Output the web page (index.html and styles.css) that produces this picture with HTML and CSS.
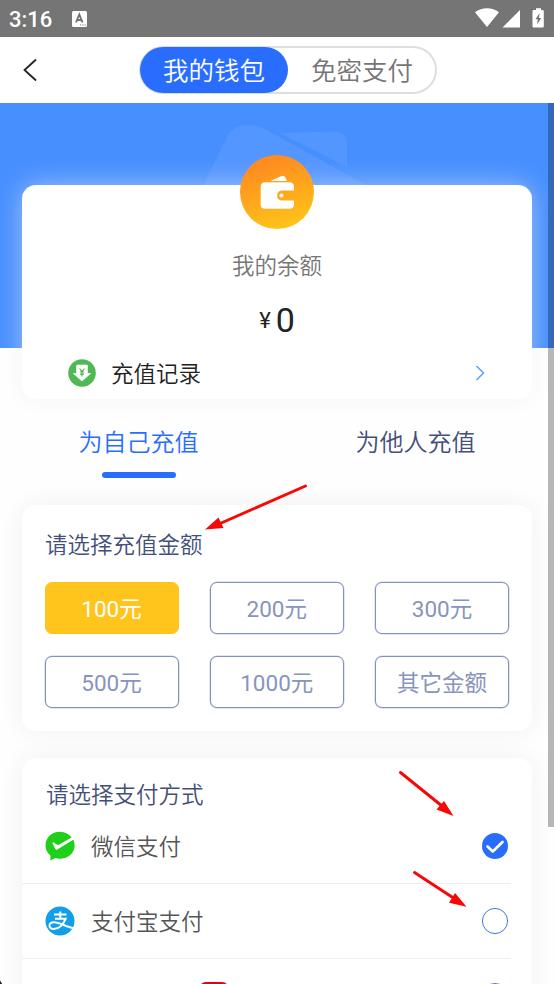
FILE: index.html
```html
<!DOCTYPE html>
<html lang="zh-CN">
<head>
<meta charset="utf-8">
<title>我的钱包</title>
<link rel="stylesheet" href="styles.css">
</head>
<body>
<div class="screen">
  <div class="status">
    <span class="clock">3:16</span>
    <svg class="ime" width="15" height="16" viewBox="0 0 15 16"><rect width="15" height="16" rx="1.5" fill="#fff"/><path d="M4 11.5 7.3 3.5 10.6 11.5M5.1 9h4.4" fill="none" stroke="#757575" stroke-width="1.9"/><path d="M8 14h1.2M10.3 14h1.2M12.6 14h1.2" stroke="#757575" stroke-width="1.2"/></svg>
    <svg class="signals" width="72" height="20" viewBox="0 0 72 20"><path d="M0 4.2C7-1.1 17-1.1 24 4.2L12 19Z" fill="#fff"/><path d="M45 2v17.5H27.5Z" fill="#fff"/><path d="M58.8 2H61V.2h5V2h1.500q1.300 0 1.300 1.300v15q0 1.300-1.300 1.300h-8.700q-1.300 0-1.300-1.300v-15Q57.500 2 58.800 2Z" fill="#fff"/><path d="m64.600 5-4.100 6.200h2.300l-.8 5.200 4.200-6.500h-2.300Z" fill="#757575"/></svg>
  </div>
  <header class="header">
    <svg class="back" width="16" height="24" viewBox="0 0 16 24"><path d="M13.500 2 2.500 12l11 10" fill="none" stroke="#222" stroke-width="1.800" stroke-linecap="round"/></svg>
    <nav class="switch"><a class="seg seg-on">我的钱包</a><a class="seg">免密支付</a></nav>
  </header>

  <section class="wallet">
    <svg class="watermark" width="180" height="90" viewBox="0 0 180 90"><path d="M0 80 26 27Q32 14 45 13.500 58 12 70 20L168 74V90H0Z" fill="#fff" fill-opacity=".07"/><path d="M80 21 134 19.500Q147 20 147 33V55Z" fill="#fff" fill-opacity=".07"/></svg>
    <div class="card balance">
      <svg class="badge" width="74" height="74" viewBox="0 0 74 74"><defs><linearGradient id="gold" x1=".35" y1="0" x2=".65" y2="1"><stop offset=".1" stop-color="#ff8c20"/><stop offset="1" stop-color="#ffc518"/></linearGradient></defs><circle cx="37" cy="37" r="37" fill="url(#gold)"/><path d="M30.500 26 41 21.200q3.200-1.200 4.700 1.800l1.200 3Z" fill="#fff"/><path d="M25 27.300h24.500q4.500 0 4.500 4.500v3.700H42.500q-5.300 0-5.300 5t5.300 5H54v3.700q0 4.500-4.500 4.500H25q-4.300 0-4.300-4.500V31.800q0-4.500 4.300-4.500Z" fill="#fff"/><circle cx="41.500" cy="40.500" r="2" fill="#fff"/></svg>
      <div class="balance-title">我的余额</div>
      <div class="amount"><span class="yen">¥</span><span>0</span></div>
      <div class="history">
        <svg width="28" height="28" viewBox="0 0 28 28"><circle cx="14" cy="14" r="13.800" fill="#50b955"/><path d="M8.500 7q0-1 1-1h9q1 0 1 1v7.500h3.200L14 22l-8.700-7.500h3.200Z" fill="#fff" stroke="#fff" stroke-width=".6" stroke-linejoin="round"/><path d="m11.600 9.500 2.400 3.200 2.400-3.200M14 12.500v5M11.800 13h4.400M11.800 15.200h4.400" fill="none" stroke="#50b955" stroke-width="1.200"/></svg>
        <span class="history-label">充值记录</span>
        <svg width="10" height="16" viewBox="0 0 10 16"><path d="m1.500 1 7 7-7 7" fill="none" stroke="#579bfa" stroke-width="1.400"/></svg>
      </div>
    </div>
  </section>

  <nav class="tabs"><a class="tab tab-on">为自己充值</a><a class="tab">为他人充值</a></nav>

  <section class="card recharge">
    <h2 class="title">请选择充值金额</h2>
    <div class="grid">
      <button class="option option-on">100元</button><button class="option">200元</button><button class="option">300元</button>
      <button class="option">500元</button><button class="option">1000元</button><button class="option">其它金额</button>
    </div>
  </section>

  <section class="card payment">
    <h2 class="title">请选择支付方式</h2>
    <div class="method first">
      <svg width="30" height="30" viewBox="0 0 30 30"><path d="M15 .8C6.500.8.500 7 .500 14.500c0 4 1.900 7.700 5 10.200l-.2 4.800 5-2.500c1.500.5 3 .8 4.700.8 8.200 0 14.600-6 14.600-13.300 0-2.100-.5-4-1.400-5.800L12.300 18.500c-.8.5-1.700.3-2.100-.7L7.300 12c.9-.6 1.700-.5 2.300-.1l3.400 2.300L26.600 6.500C23.900 3 19.700.8 15 .8Z" fill="#20cf19"/></svg>
      <span class="method-name">微信支付</span>
      <svg class="radio" width="28" height="28" viewBox="0 0 28 28"><circle cx="14" cy="14" r="13" fill="#296dff"/><path d="m6.500 14.500 5.300 5 9.700-9.500" fill="none" stroke="#fff" stroke-width="2.600" stroke-linecap="round" stroke-linejoin="round"/></svg>
    </div>
    <div class="method">
      <svg width="30" height="30" viewBox="0 0 30 30"><circle cx="15" cy="15" r="14.500" fill="#109fe8"/><path d="M15.300 5.500v7M9 8.500h12.500M10 12.700h10.700C18.500 18.200 14 23 8.800 23c-6.300 0-5.300-6.700.2-6.700 5.500 0 12 4.500 19.500 5.900" fill="none" stroke="#fff" stroke-width="2"/></svg>
      <span class="method-name">支付宝支付</span>
      <svg class="radio" width="28" height="28" viewBox="0 0 28 28"><circle cx="14" cy="14" r="12.600" fill="#fff" stroke="#3e79e2" stroke-width="1"/></svg>
    </div>
    <div class="method last">
      <span class="union"></span>
      <svg class="radio" width="28" height="28" viewBox="0 0 28 28"><circle cx="14" cy="14" r="12.600" fill="#fff" stroke="#6c7fba" stroke-width="1"/></svg>
    </div>
  </section>
  <div class="scrollbar"></div>
  <svg class="arrows" width="554" height="984" viewBox="0 0 554 984"><g stroke="#f90606" stroke-width="2.900" stroke-linecap="round"><path d="M305.500 486 219 524M400.500 772.500 442 806M414.500 872.500 455 899"/></g><g fill="#f90606"><path d="m205 529.500 13.500-12 5 10.500ZM453.500 816l-17-6.500 7.500-8.500ZM466.500 906.800l-17.500-4 6-9.800Z"/></g><path d="M0 980.500 2.200 984H0Z" fill="#222"/></svg>
</div>
</body>
</html>
```
FILE: styles.css
```css
* { box-sizing: border-box; }
body { margin: 0; background: #fff; font-family: Roboto, "Noto Sans CJK SC", sans-serif; font-weight: 400; }
.screen { position: relative; width: 554px; height: 984px; overflow: hidden; background: #fefefe; }

.status { height: 37px; padding: 0 7px 0 9px; display: flex; align-items: center; background: #757575; }
.clock { width: 63px; color: #fff; font-size: 22px; font-weight: 500; line-height: 36px; padding-top: 2px; }
.signals { margin: 0 0 2px auto; }
.status .signals { flex: none; width: 72px; }

.header { height: 66px; display: grid; grid-template-columns: 139px 298px 1fr; align-items: center; background: #fff; }
.back { margin-left: 22px; }
.switch { height: 48px; display: flex; border: 2px solid #dedede; border-radius: 24px; }
.seg { flex: 1; color: #757575; font-size: 25.500px; font-weight: 350; line-height: 47px; text-align: center; }
.seg-on { flex: 0 0 148px; height: 46px; margin: -1px 1px -1px -1px; border-radius: 23px; background: #296dff; color: #fff; line-height: 49px; }

.wallet { position: relative; padding: 82px 22px 0; background: linear-gradient(#478fff, #478fff) top / 100% 245px no-repeat; }
.watermark { position: absolute; left: 200px; top: 9px; }
.card { position: relative; background: #fff; border-radius: 14px; }
.balance { height: 214px; display: flex; flex-direction: column; align-items: center; box-shadow: 0 0 26px rgba(255, 255, 255, .5), 0 0 24px rgba(0, 0, 0, .045); }
.badge { margin-top: -30px; flex: none; }
.balance-title { margin-top: 20px; color: #757575; font-size: 22.500px; font-weight: 350; line-height: 32px; padding-top: 1px; margin-bottom: -1px; }
.amount { display: flex; align-items: center; gap: 5px; height: 40px; margin-top: 19px; color: #222; font-size: 34px; line-height: 40px; }
.yen { font-size: 22px; padding-top: 1px; }
.history { width: 100%; display: flex; align-items: center; margin-top: 18px; padding: 0 47px 0 46px; height: 30px; flex: none; }
.history-label { flex: 1; margin-left: 15px; color: #222; font-size: 22.500px; font-weight: 350; line-height: 30px; padding-top: 2px; }

.tabs { height: 106px; padding-top: 25px; display: flex; }
.tab { width: 277px; display: flex; flex-direction: column; align-items: center; color: #424f78; font-size: 24px; font-weight: 350; line-height: 38px; }
.tab-on { color: #296dff; }
.tab-on::after { content: ""; width: 74px; height: 6px; margin-top: 10px; border-radius: 3px; background: #296dff; }

.recharge, .payment { margin: 0 22px; box-shadow: 0 0 26px rgba(0, 0, 0, .06); }
.recharge { height: 226px; padding: 24px 22px 0; }
.title { margin: 0; color: #424f78; font-size: 22.500px; font-weight: 350; line-height: 32px; padding-left: 1px; }
.grid { display: grid; grid-template-columns: repeat(3, 135px); grid-auto-rows: 53px; gap: 21px 30.250px; margin-top: 20.500px; }
.option { margin: 0 .5px 1px; padding: 2px 0 0; border: 1px solid #8390bb; box-shadow: 0 0 0 .5px rgba(131, 144, 187, .45); border-radius: 7px; background: #fff; color: #8794bc; font: inherit; font-size: 22.500px; line-height: 49px; }
.option-on { border-color: #ffc51c; box-shadow: none; background: #ffc51c; color: #fff; }

.payment { margin-top: 27px; height: 300px; padding-top: 21px; }
.payment .title { padding-left: 24px; }
.method { width: 489px; height: 75.500px; padding: 0 2px 0 23px; display: flex; align-items: center; border-bottom: 1.500px solid #eee; }
.first { height: 72.500px; padding-bottom: 2px; }
.method-name { margin-left: 16px; color: #555; font-size: 22.500px; font-weight: 350; line-height: 32px; padding-top: 2px; }
.radio { margin-left: auto; }
.last { height: 73.500px; border: 0; }
.union { width: 30px; height: 30px; margin: 2px 0 0 154px; border-radius: 7px; background: #e50012; }

.scrollbar { position: absolute; right: 0; top: 103px; width: 6px; height: 724px; background: rgba(0, 0, 0, .28); }
.arrows { position: absolute; left: 0; top: 0; pointer-events: none; }
```
